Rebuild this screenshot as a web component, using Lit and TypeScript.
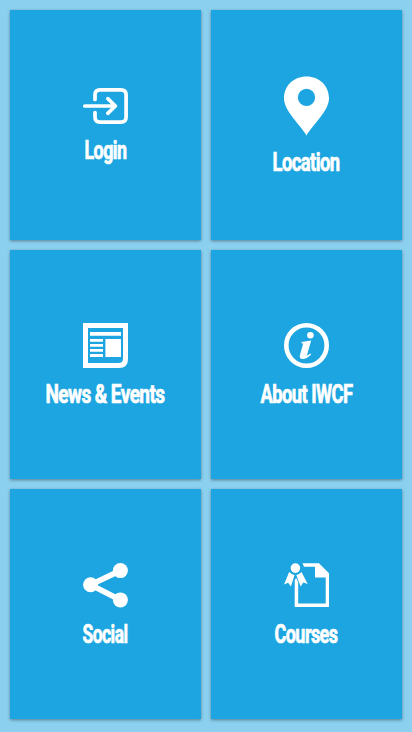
import { LitElement, html, svg, css } from "lit";
import { customElement } from "lit/decorators.js";

const tiles = [
  { label: "Login", width: 42, h: 36, art: svg`<g fill="none" stroke="#fff" stroke-width="3.7" stroke-linecap="round" stroke-linejoin="round"><path d="M12 11.5V7Q12 1.9 17 1.9H38Q43.1 1.9 43.1 7V29Q43.1 34.1 38 34.1H17Q12 34.1 12 29V24.5"/><path d="M1.8 18H32M24.8 10.7L32.4 18L24.8 25.3"/></g>` },
  { label: "Location", width: 67, h: 60, art: svg`<path fill-rule="evenodd" d="M22.5 59.5C16 48.5 0 35 0 22.3C0 9.5 10 .5 22.5 .5S45 9.5 45 22.3C45 35 29 48.5 22.5 59.5ZM22.5 12.8A8.6 8.6 0 1 0 22.5 30A8.6 8.6 0 1 0 22.5 12.8Z"/>` },
  { label: "News & Events", width: 119, h: 45, art: svg`<path fill-rule="evenodd" d="M0 0H45V36Q45 45 36 45H0ZM5 5V40H35.5Q40 40 40 35.5V5Z"/><path d="M7 9H38V12.7H7ZM7 16H20V18.8H7ZM7 21H20V23.8H7ZM7 26H20V28.8H7ZM7 31H20V34H7ZM22.4 16H38V34H22.4Z"/>` },
  { label: "About IWCF", width: 92, h: 45, art: svg`<circle cx="22.5" cy="22.5" r="20.2" fill="none" stroke="#fff" stroke-width="4.6"/><circle cx="26.4" cy="12.3" r="3.3"/><path d="M17.5 18.9L27.2 17.5L23.3 31C22.9 32.8 23.6 33 26.2 30.6L27.2 31.6C23.6 35.4 20.5 36.3 18 36C15.7 35.6 15.4 33.7 16 31.8L18.8 22C19.2 20.5 19 20.2 17.3 20.3Z"/>` },
  { label: "Social", width: 45, h: 45, art: svg`<path d="M37.4 7.6L7.6 21.8L37.4 36.9" fill="none" stroke="#fff" stroke-width="5.6"/><circle cx="37.4" cy="7.6" r="7.5"/><circle cx="7.6" cy="21.8" r="7.5"/><circle cx="37.4" cy="36.9" r="7.5"/>` },
  { label: "Courses", width: 63, h: 45, art: svg`<path fill-rule="evenodd" d="M18.5 .2H35L45 10.3V44H10.7V17L12.2 15L14.2 19V40.6H41.7V14.4H31V3.7H20Z"/><circle cx="11.4" cy="5.1" r="4.8"/><path d="M5.2 9Q7.5 11.5 10.6 12L6.9 23.6L4.1 19.8L0 21.5ZM17.5 9Q15.3 11.5 12.3 12L16.6 23.6L19.3 19.6L23.7 21Z"/>` },
];

@customElement("app-root")
export class AppRoot extends LitElement {
  static styles = css`
    :host {
      display: grid;
      box-sizing: border-box;
      height: 732px;
      padding: 10px 10px 13px;
      gap: 10px;
      grid-template-columns: 1fr 1fr;
      grid-template-rows: repeat(3, 1fr);
      background: #8cd0ef;
    }
    .tile {
      display: flex;
      flex-direction: column;
      align-items: center;
      justify-content: center;
      background: #1ca5e0;
      box-shadow: 0 1px 3px rgba(0, 0, 0, 0.4);
    }
    svg {
      display: block;
      overflow: visible;
      fill: #fff;
    }
    .label {
      font: bold 26px Roboto, "Open Sans", sans-serif;
      stroke: #fff;
      stroke-width: 0.7px;
      letter-spacing: -0.8px;
    }
  `;

  render() {
    return tiles.map(
      (t) => html`
        <div class="tile">
          <svg width="45" height=${t.h} viewBox="0 0 45 ${t.h}">${t.art}</svg>
          <svg class="label" width=${t.width} height="38">
            <text x="-0.5" y="35.4" textLength=${t.width} lengthAdjust="spacingAndGlyphs">${t.label}</text>
          </svg>
        </div>
      `
    );
  }
}
